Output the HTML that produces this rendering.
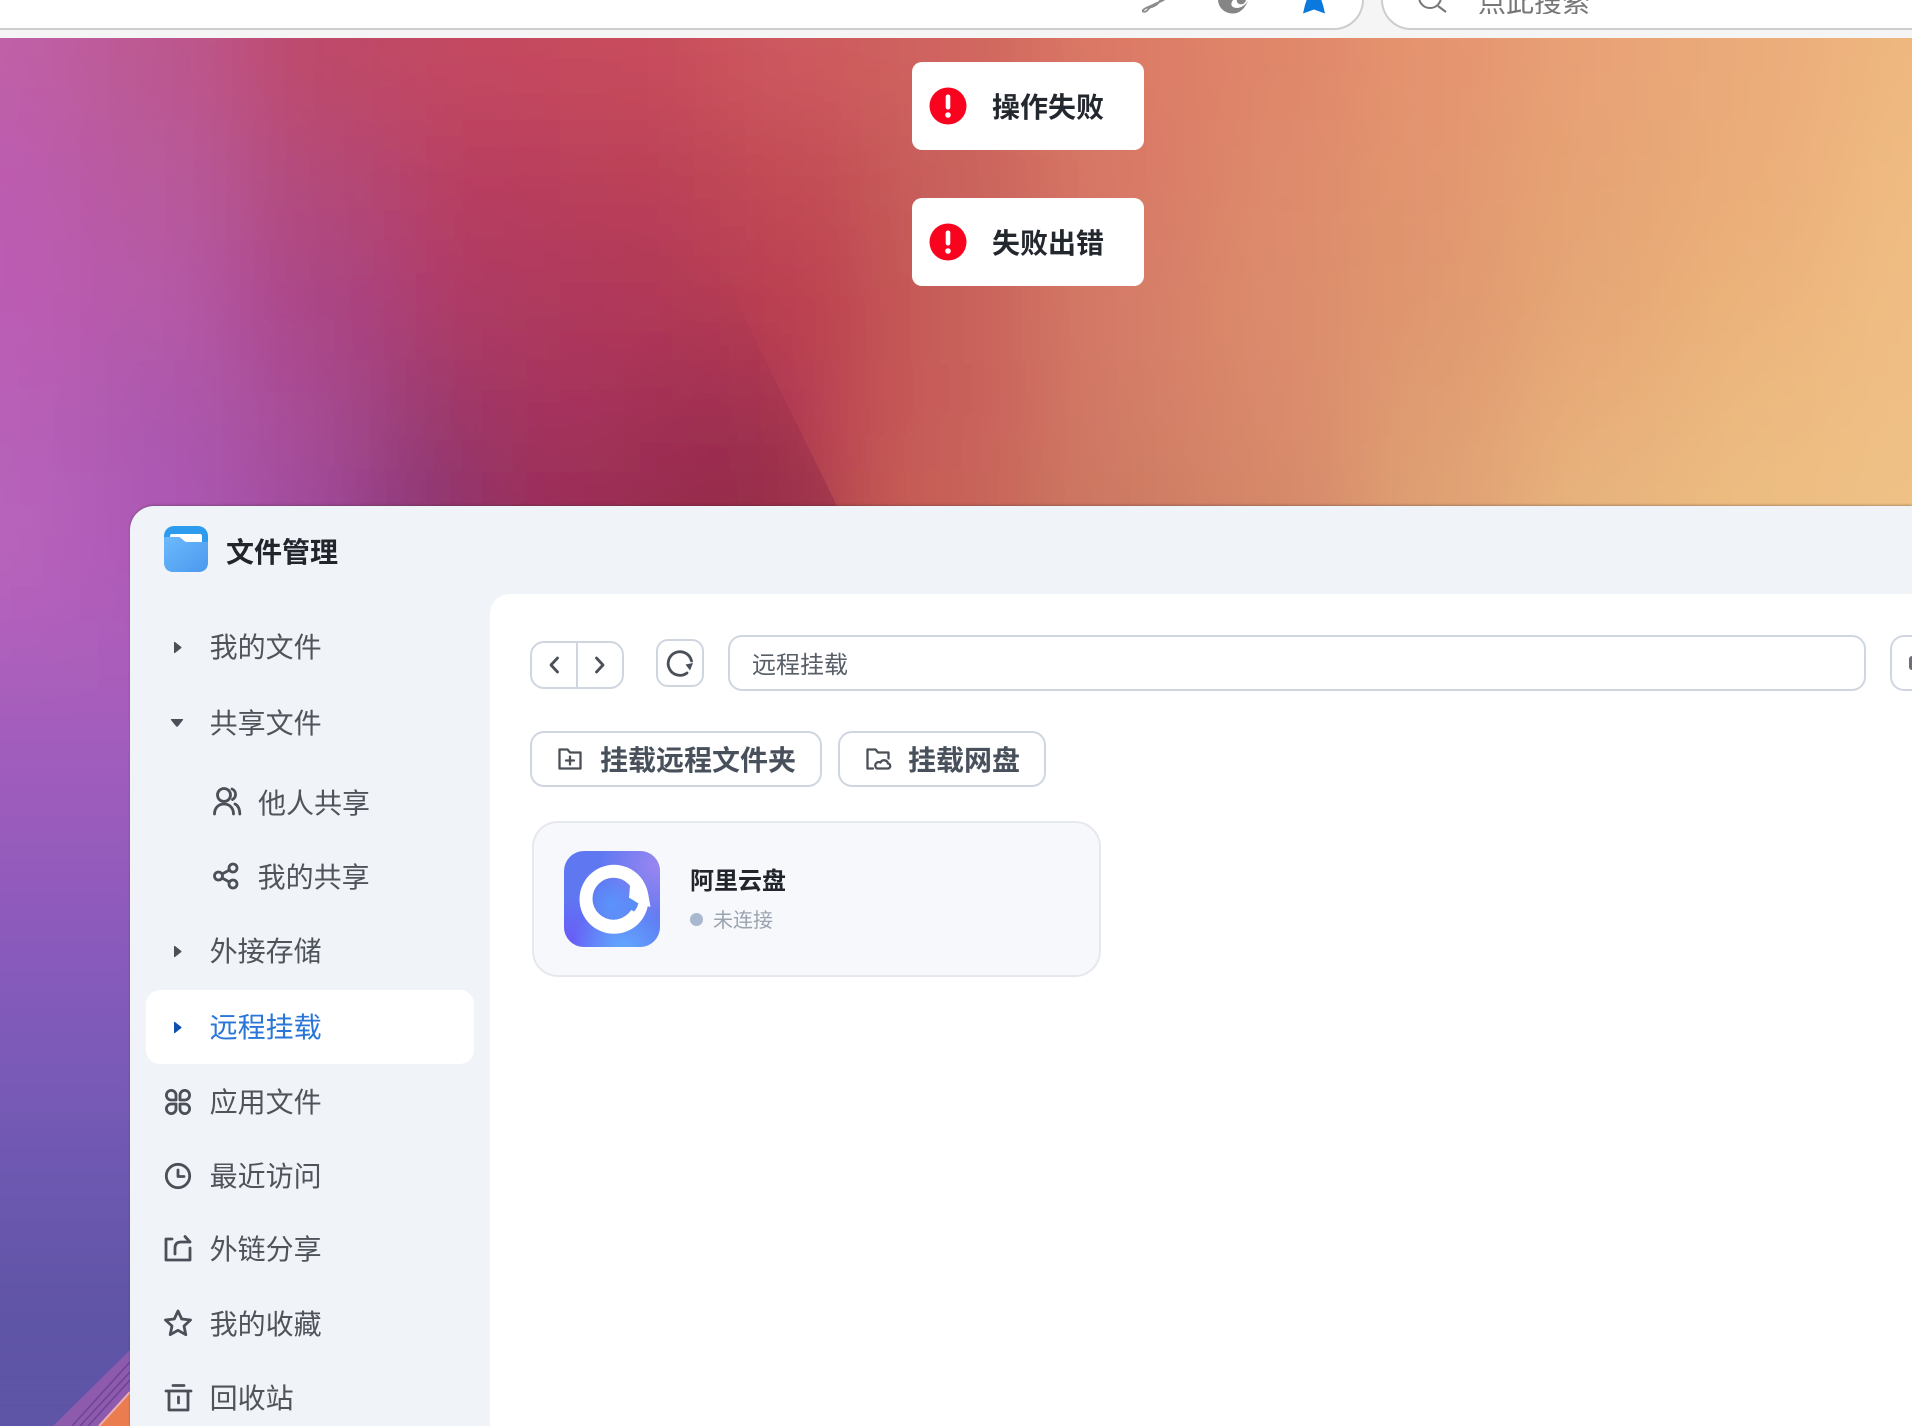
<!DOCTYPE html>
<html lang="zh-CN">
<head>
<meta charset="utf-8">
<title>文件管理</title>
<style>
html,body{margin:0;padding:0;width:1912px;height:1426px;overflow:hidden;background:#f5f5f5}
body{position:relative;font-family:"Liberation Sans","Noto Sans CJK SC",sans-serif}
.a{position:absolute}
.t{position:absolute;white-space:nowrap;line-height:40px;height:40px;font-size:28px;color:#4f545b;letter-spacing:0}
.b{font-weight:700}
svg{position:absolute;overflow:visible}
.ic{fill:none;stroke:#4b5058;stroke-width:2.8;stroke-linecap:round;stroke-linejoin:round}
.box{position:absolute;box-sizing:border-box;background:#fff;border:2px solid #cfd6e0}
.toast{position:absolute;left:912px;width:232px;height:88px;background:#fff;border-radius:10px}
</style>
</head>
<body>

<!-- wallpaper -->
<svg class="a" style="left:0;top:38px;overflow:hidden" width="1912" height="1388" viewBox="0 38 1912 1388">
<defs>
<filter id="bl" filterUnits="userSpaceOnUse" x="-400" y="-400" width="2700" height="1826"><feGaussianBlur stdDeviation="50"/></filter>
<radialGradient id="wedge" gradientUnits="userSpaceOnUse" cx="835" cy="506" r="270"><stop offset="0" stop-color="#8a2646" stop-opacity=".45"/><stop offset=".6" stop-color="#8a2646" stop-opacity=".15"/><stop offset="1" stop-color="#8a2646" stop-opacity="0"/></radialGradient>
<clipPath id="edge"><polygon points="500,200 715,250 752,333 790,410 837,506 500,506"/></clipPath>
</defs>
<rect x="0" y="1250" width="400" height="176" fill="#5e54a6"/>
<g filter="url(#bl)" shape-rendering="crispEdges">
<!-- row 1 -->
<rect x="-200" y="-200" width="280" height="320" fill="#c060a8"/><rect x="80" y="-200" width="160" height="320" fill="#bc5890"/><rect x="240" y="-200" width="160" height="320" fill="#be4a68"/><rect x="400" y="-200" width="160" height="320" fill="#c44860"/><rect x="560" y="-200" width="160" height="320" fill="#c84c5c"/><rect x="720" y="-200" width="160" height="320" fill="#ce5a5e"/><rect x="880" y="-200" width="160" height="320" fill="#d0655e"/><rect x="1040" y="-200" width="160" height="320" fill="#dc7a66"/><rect x="1200" y="-200" width="160" height="320" fill="#e0876a"/><rect x="1360" y="-200" width="160" height="320" fill="#e59470"/><rect x="1520" y="-200" width="160" height="320" fill="#e8a276"/><rect x="1680" y="-200" width="160" height="320" fill="#ebac7a"/><rect x="1840" y="-200" width="400" height="320" fill="#eeb880"/>
<!-- row 2 -->
<rect x="-200" y="120" width="280" height="120" fill="#bc5cb0"/><rect x="80" y="120" width="160" height="120" fill="#b85a9c"/><rect x="240" y="120" width="160" height="120" fill="#b24a78"/><rect x="400" y="120" width="160" height="120" fill="#b83e5e"/><rect x="560" y="120" width="160" height="120" fill="#ba4058"/><rect x="720" y="120" width="160" height="120" fill="#c24c54"/><rect x="880" y="120" width="160" height="120" fill="#c8625c"/><rect x="1040" y="120" width="160" height="120" fill="#d87866"/><rect x="1200" y="120" width="160" height="120" fill="#de8a6c"/><rect x="1360" y="120" width="160" height="120" fill="#e2966f"/><rect x="1520" y="120" width="160" height="120" fill="#e6a474"/><rect x="1680" y="120" width="160" height="120" fill="#ebae7a"/><rect x="1840" y="120" width="400" height="120" fill="#f0bc82"/>
<!-- row 3 -->
<rect x="-200" y="240" width="280" height="120" fill="#bc5cb4"/><rect x="80" y="240" width="160" height="120" fill="#b65aa8"/><rect x="240" y="240" width="160" height="120" fill="#aa4484"/><rect x="400" y="240" width="160" height="120" fill="#ae3a62"/><rect x="560" y="240" width="160" height="120" fill="#b03858"/><rect x="720" y="240" width="160" height="120" fill="#bc4050"/><rect x="880" y="240" width="160" height="120" fill="#c8605a"/><rect x="1040" y="240" width="160" height="120" fill="#d67c68"/><rect x="1200" y="240" width="160" height="120" fill="#dc8c6c"/><rect x="1360" y="240" width="160" height="120" fill="#e09870"/><rect x="1520" y="240" width="160" height="120" fill="#e6a876"/><rect x="1680" y="240" width="160" height="120" fill="#ecb47c"/><rect x="1840" y="240" width="400" height="120" fill="#f0be84"/>
<!-- row 4 -->
<rect x="-200" y="360" width="280" height="110" fill="#b860b8"/><rect x="80" y="360" width="160" height="110" fill="#ac58ae"/><rect x="240" y="360" width="130" height="110" fill="#a84c94"/><rect x="370" y="360" width="110" height="110" fill="#983a6e"/><rect x="480" y="360" width="160" height="110" fill="#a4325c"/><rect x="640" y="360" width="160" height="110" fill="#a43054"/><rect x="800" y="360" width="80" height="110" fill="#c04450"/><rect x="880" y="360" width="160" height="110" fill="#c85f5a"/><rect x="1040" y="360" width="160" height="110" fill="#d27c66"/><rect x="1200" y="360" width="160" height="110" fill="#da8a6c"/><rect x="1360" y="360" width="160" height="110" fill="#e09e72"/><rect x="1520" y="360" width="160" height="110" fill="#e8ae7a"/><rect x="1680" y="360" width="160" height="110" fill="#ecba80"/><rect x="1840" y="360" width="400" height="110" fill="#f0c086"/>
<!-- row 5 -->
<rect x="-200" y="470" width="280" height="200" fill="#b864bc"/><rect x="80" y="470" width="160" height="200" fill="#ad58b6"/><rect x="240" y="470" width="130" height="200" fill="#a04c9c"/><rect x="370" y="470" width="110" height="200" fill="#8a3674"/><rect x="480" y="470" width="160" height="200" fill="#9a2e56"/><rect x="640" y="470" width="180" height="200" fill="#962c4c"/><rect x="820" y="470" width="60" height="200" fill="#c04c50"/><rect x="880" y="470" width="160" height="200" fill="#c86458"/><rect x="1040" y="470" width="160" height="200" fill="#cc7a62"/><rect x="1200" y="470" width="160" height="200" fill="#d48868"/><rect x="1360" y="470" width="160" height="200" fill="#e0a274"/><rect x="1520" y="470" width="160" height="200" fill="#e8b67e"/><rect x="1680" y="470" width="160" height="200" fill="#ecbe82"/><rect x="1840" y="470" width="400" height="200" fill="#f0c286"/>
<!-- left strip rows -->
<rect x="-200" y="620" width="600" height="110" fill="#aa5ebc"/>
<rect x="-200" y="730" width="600" height="130" fill="#9c5cbc"/>
<rect x="-200" y="860" width="600" height="130" fill="#8c5abc"/>
<rect x="-200" y="990" width="600" height="130" fill="#7c5ab8"/>
<rect x="-200" y="1120" width="600" height="130" fill="#6c58b0"/>
<rect x="-200" y="1250" width="600" height="176" fill="#5e54a6"/>
</g>
<g clip-path="url(#edge)"><rect x="500" y="200" width="340" height="306" fill="url(#wedge)"/></g>
<!-- corner stripes -->
<polygon points="130,1350 130,1426 53,1426" fill="#8e5aae"/>
<path d="M130 1362 L72 1426 M130 1372 L80 1426 M130 1380 L88 1426" stroke="#6e4596" stroke-width="1.600" fill="none"/>
<polygon points="130,1393 130,1426 100,1426" fill="#ea7c50"/>
<path d="M130 1392 L99 1426" stroke="#f0b0b0" stroke-width="2" fill="none"/>
</svg>

<!-- browser chrome -->
<div class="a" style="left:0;top:0;width:1912px;height:38px;background:#f6f5f6"></div>
<div class="a" style="left:0;top:0;width:1364px;height:30px;box-sizing:border-box;background:#fff;border-right:2px solid #cdcdcd;border-bottom:2px solid #cdcdcd;border-bottom-right-radius:30px"></div>
<div class="a" style="left:1381px;top:0;width:531px;height:30px;box-sizing:border-box;background:#fff;border-left:2px solid #cdcdcd;border-bottom:2px solid #cdcdcd;border-bottom-left-radius:30px"></div>
<div class="a" style="left:1140px;top:0;width:30px;height:14px;overflow:hidden"><svg style="left:0;top:0" width="30" height="14" viewBox="0 0 30 14"><path d="M25 -1C21 2 16 3 13 5L6 8Q2 10 3 11.500 6 12.500 8 9.500L10 7.500C14 6.500 18 5 21 -1" fill="#fff" stroke="#8b8b8b" stroke-width="1.800"/></svg></div>
<div class="a" style="left:1217px;top:0;width:34px;height:14px;overflow:hidden"><svg style="left:0;top:0" width="34" height="14" viewBox="0 0 34 14"><path d="M1 -1C1 8 8 13.500 16 13.500 23 13.500 28 8 31 1 27 7 21 9 17 7.500 13 6 14 2 17 -1z" fill="#858585"/><path d="M20 -1C19 3 22 5 26 4 28 3 29 1 29 -1z" fill="#858585"/></svg></div>
<div class="a" style="left:1302px;top:0;width:24px;height:14px;overflow:hidden"><svg style="left:0;top:0" width="24" height="14" viewBox="0 0 24 14"><path d="M5 -1H19L21 5 23 13.500 12 9.500 1 13.500 3 5z" fill="#0a78dc"/></svg></div>
<div class="a" style="left:1416px;top:0;width:34px;height:14px;overflow:hidden"><svg style="left:0;top:0" width="34" height="14" viewBox="0 0 34 14"><circle cx="14" cy="-3" r="11" fill="none" stroke="#777" stroke-width="2"/><path d="M22 6l8 6" stroke="#777" stroke-width="2.200" fill="none"/></svg></div>
<div class="a" style="left:1478px;top:0;width:120px;height:14px;overflow:hidden"><div class="t" style="left:0;top:-17px;color:#777">点此搜索</div></div>

<!-- toasts -->
<div class="toast" style="top:62px"></div>
<div class="toast" style="top:198px"></div>
<svg style="left:929px;top:87px" width="38" height="38" viewBox="0 0 38 38"><circle cx="19" cy="19" r="18.500" fill="#f8041f"/><rect x="16.700" y="7.500" width="4.600" height="15" rx="2.300" fill="#fff"/><circle cx="19" cy="28" r="2.800" fill="#fff"/></svg>
<svg style="left:929px;top:223px" width="38" height="38" viewBox="0 0 38 38"><circle cx="19" cy="19" r="18.500" fill="#f8041f"/><rect x="16.700" y="7.500" width="4.600" height="15" rx="2.300" fill="#fff"/><circle cx="19" cy="28" r="2.800" fill="#fff"/></svg>
<div class="t b" style="left:992px;top:88px;color:#23272e">操作失败</div>
<div class="t b" style="left:992px;top:224px;color:#23272e">失败出错</div>

<!-- window -->
<div class="a" style="left:130px;top:506px;width:1782px;height:920px;background:#f0f3f8;border-radius:24px 0 0 0;box-shadow:0 -1px 2px rgba(60,50,50,.35)"></div>
<div class="a" style="left:490px;top:594px;width:1422px;height:832px;background:#fff;border-radius:20px 0 0 0"></div>

<!-- app icon -->
<svg style="left:164px;top:526px" width="44" height="46" viewBox="0 0 44 46">
<defs><linearGradient id="fb" x1="0" y1="0" x2="1" y2="1"><stop offset="0" stop-color="#6cbafc"/><stop offset="1" stop-color="#4b98ee"/></linearGradient></defs>
<rect width="44" height="46" rx="10" fill="#2e9cee"/>
<path d="M6 10q0-2 2-2h28q2 0 2 2v10H6z" fill="#fff"/>
<path d="M0 13q0-2 2-2h12q2 0 4 2t4 3h22v20q0 10-10 10H10Q0 46 0 36z" fill="url(#fb)"/>
</svg>
<div class="t b" style="left:226px;top:533px;color:#22262c">文件管理</div>

<!-- sidebar -->
<div class="a" style="left:146px;top:990px;width:328px;height:74px;background:#fff;border-radius:14px"></div>

<svg style="left:173px;top:641px" width="9" height="13" viewBox="0 0 9 13"><path d="M1 1.500v10q0 1 1 .5l6-4.700q1-.8 0-1.600L2 1q-1-.5-1 .5z" fill="#4b5058"/></svg>
<svg style="left:170px;top:718px" width="14" height="10" viewBox="0 0 14 10"><path d="M1.500 1h11q1 0 .5 1L8 8.300q-1 1-2 0L1 2q-.5-1 .5-1z" fill="#4b5058"/></svg>
<svg style="left:173px;top:945px" width="9" height="13" viewBox="0 0 9 13"><path d="M1 1.500v10q0 1 1 .5l6-4.700q1-.8 0-1.600L2 1q-1-.5-1 .5z" fill="#4b5058"/></svg>
<svg style="left:173px;top:1021px" width="9" height="13" viewBox="0 0 9 13"><path d="M1 1.500v10q0 1 1 .5l6-4.700q1-.8 0-1.600L2 1q-1-.5-1 .5z" fill="#0f4fb0"/></svg>

<div class="t" style="left:209.600px;top:628px">我的文件</div>
<div class="t" style="left:209.600px;top:704px">共享文件</div>
<div class="t" style="left:258px;top:784px">他人共享</div>
<div class="t" style="left:257.600px;top:858px">我的共享</div>
<div class="t" style="left:209.600px;top:932px">外接存储</div>
<div class="t" style="left:209.600px;top:1008px;color:#2a76d8">远程挂载</div>
<div class="t" style="left:209.600px;top:1083px">应用文件</div>
<div class="t" style="left:209.600px;top:1157px">最近访问</div>
<div class="t" style="left:209.600px;top:1230px">外链分享</div>
<div class="t" style="left:209.600px;top:1305px">我的收藏</div>
<div class="t" style="left:209.600px;top:1379px">回收站</div>

<!-- users -->
<svg style="left:213px;top:787px" width="28" height="28" viewBox="0 0 28 28" class="ic"><circle cx="11" cy="8" r="6.500"/><path d="M1.500 27c0-6 4-10 9.500-10s9.500 4 9.500 10M19 2c2.500 1 3.700 3.500 3.500 6-.2 2-1.300 3.500-3 4.500M22 17c3 1.500 4.700 5 4.800 10"/></svg>
<!-- share -->
<svg style="left:213px;top:863px" width="26" height="26" viewBox="0 0 26 26" class="ic"><circle cx="5.500" cy="13" r="4"/><circle cx="20" cy="5" r="4"/><circle cx="20" cy="21" r="4"/><path d="M9 11l7.500-4M9 15l7.500 4"/></svg>
<!-- apps -->
<svg style="left:165px;top:1089px" width="26" height="26" viewBox="0 0 26 26" class="ic"><path d="M11 11H6.500a4.800 4.800 0 1 1 4.500-4.500zM15 11V6.500a4.800 4.800 0 1 1 4.500 4.500zM11 15v4.500a4.800 4.800 0 1 1-4.500-4.500zM15 15h4.500a4.800 4.800 0 1 1-4.500 4.500z"/></svg>
<!-- clock -->
<svg style="left:165px;top:1163px" width="26" height="26" viewBox="0 0 26 26" class="ic"><circle cx="13" cy="13" r="11.700"/><path d="M13 7v6.500h6"/></svg>
<!-- link share -->
<svg style="left:164px;top:1234px" width="28" height="28" viewBox="0 0 28 28" class="ic"><path d="M8 5H2v21h24V14M11 20v-6q0-6 6-6h8M21 2.500l5 5.500"/></svg>
<!-- star -->
<svg style="left:163px;top:1308px" width="30" height="30" viewBox="0 0 30 30" class="ic"><path d="M15 3l3.700 8 8.800 1-6.500 6 1.800 8.700L15 22.300l-7.800 4.400L9 18l-6.500-6 8.800-1z"/></svg>
<!-- trash -->
<svg style="left:165px;top:1384px" width="27" height="28" viewBox="0 0 27 28" class="ic"><path d="M1 7h25M8 1.500h11M4 7v19h19V7M13.500 13v6"/></svg>

<!-- toolbar -->
<div class="box" style="left:530px;top:641px;width:94px;height:48px;border-radius:14px"></div>
<div class="a" style="left:576px;top:642px;width:2px;height:46px;background:#cfd6e0"></div>
<svg style="left:548px;top:656px" width="12" height="18" viewBox="0 0 12 18" class="ic"><path d="M9.500 2L3 9l6.500 7"/></svg>
<svg style="left:594px;top:656px" width="12" height="18" viewBox="0 0 12 18" class="ic"><path d="M2.500 2L9 9l-6.500 7"/></svg>

<div class="box" style="left:656px;top:639px;width:48px;height:48px;border-radius:12px"></div>
<svg style="left:666px;top:649px" width="28" height="28" viewBox="0 0 28 28" class="ic"><path d="M25.500 12A11.800 11.800 0 1 0 21 24"/><path d="M27 14l-7.500 1.500 4.500 6z" fill="#4b5058" stroke="none"/></svg>

<div class="box" style="left:728px;top:635px;width:1138px;height:56px;border-radius:14px"></div>
<div class="t" style="left:752px;top:646px;font-size:24px;color:#585e67">远程挂载</div>
<div class="box" style="left:1890px;top:635px;width:22px;height:56px;border-radius:14px 0 0 14px;border-right:0"></div>
<div class="a" style="left:1909px;top:656px;width:3px;height:14px;background:#6a7078;border-radius:3px 0 0 3px"></div>

<div class="box" style="left:530px;top:731px;width:292px;height:56px;border-radius:14px"></div>
<div class="box" style="left:838px;top:731px;width:208px;height:56px;border-radius:14px"></div>
<svg style="left:558px;top:748px" width="24" height="22" viewBox="0 0 24 22" class="ic"><path d="M1.500 20.500V1.500h8l2.500 3h10.500v16zM12 8.500v8M8 12.500h8" stroke-width="2.300"/></svg>
<svg style="left:866px;top:748px" width="25" height="22" viewBox="0 0 25 22" class="ic"><path d="M7 20.500H1.500V1.500h8l2.500 3h10.500v6M11 20.500h10.500a2.500 2.500 0 0 0 .5-5 4 4 0 0 0-7.500-1 3.200 3.200 0 0 0-3.500 6z" stroke-width="2.300"/></svg>
<div class="t b" style="left:600px;top:741px;color:#48505c">挂载远程文件夹</div>
<div class="t b" style="left:908px;top:741px;color:#48505c">挂载网盘</div>

<!-- card -->
<div class="a" style="left:532px;top:821px;width:569px;height:156px;box-sizing:border-box;background:#f6f8fb;border:2px solid #e5e8ee;border-radius:26px"></div>
<svg style="left:564px;top:851px" width="96" height="96" viewBox="0 0 96 96">
<defs>
<clipPath id="lc"><rect width="96" height="96" rx="20"/></clipPath>
<radialGradient id="l1" cx=".98" cy=".15" r=".6"><stop offset="0" stop-color="#9a86f0"/><stop offset="1" stop-color="#9a86f0" stop-opacity="0"/></radialGradient>
<radialGradient id="l2" cx=".62" cy="1.05" r=".55"><stop offset="0" stop-color="#62aaff"/><stop offset="1" stop-color="#62aaff" stop-opacity="0"/></radialGradient>
<radialGradient id="l3" cx="0" cy="1" r=".55"><stop offset="0" stop-color="#6a58f8"/><stop offset="1" stop-color="#6a58f8" stop-opacity="0"/></radialGradient>
<radialGradient id="l4" cx=".5" cy=".55" r=".3"><stop offset="0" stop-color="#5c94fb"/><stop offset="1" stop-color="#5c94fb" stop-opacity="0"/></radialGradient>
</defs>
<g clip-path="url(#lc)">
<rect width="96" height="96" fill="#5f78f2"/>
<rect width="96" height="96" fill="url(#l1)"/>
<rect width="96" height="96" fill="url(#l3)"/>
<rect width="96" height="96" fill="url(#l2)"/>
<rect width="96" height="96" fill="url(#l4)"/>
<path fill-rule="evenodd" fill="#fff" d="M50 13.800a34.500 34.500 0 1 0 0 69 34.500 34.500 0 1 0 0-69zM49.500 26.700a21 21 0 1 1 0 42 21 21 0 0 1 0-42z"/>
<path fill="#fff" d="M66 35L65 46.700 74.300 52.300 86.500 56 84 42 75 28z"/>
<path fill="#5a8ef6" d="M65 46.700L74.300 52.300Q73.500 57 70 60.500L60 55z"/>
</g>
</svg>
<div class="t b" style="left:690px;top:862px;font-size:24px;color:#22262c">阿里云盘</div>
<div class="a" style="left:690px;top:913px;width:13px;height:13px;border-radius:50%;background:#a8b8cf"></div>
<div class="t" style="left:713px;top:901px;font-size:20px;color:#9aa3b0">未连接</div>

</body>
</html>
